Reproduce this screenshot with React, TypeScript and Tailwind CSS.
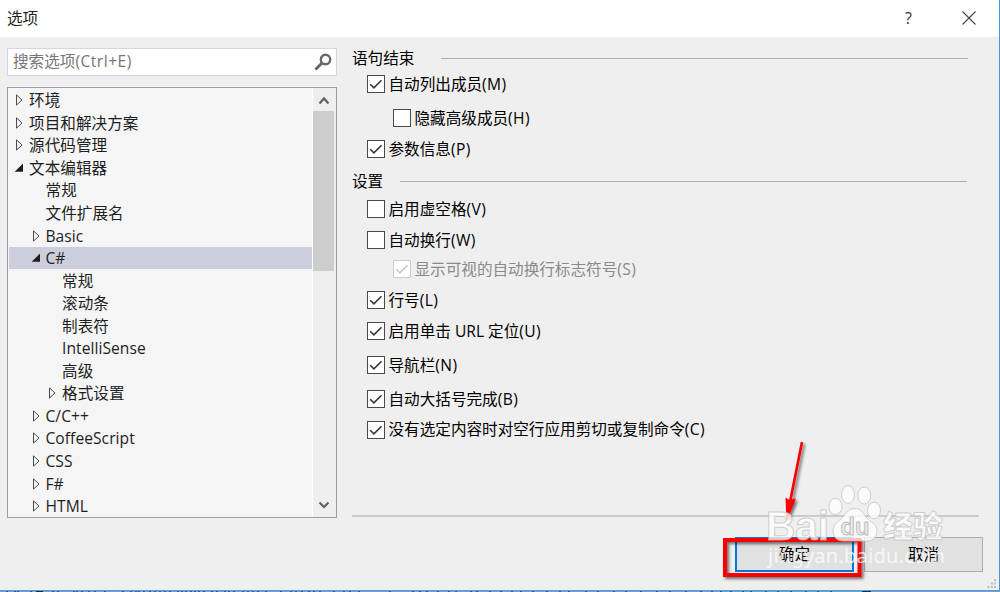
import clsx from 'clsx';

interface TreeNode {
  label: string;
  level: 0 | 1 | 2;
  state?: 'open' | 'closed';
  selected?: boolean;
}

interface Option {
  label: string;
  shortcut: string;
  gap: string;
  checked?: boolean;
  nested?: boolean;
  disabled?: boolean;
  raised?: boolean;
}

const tree: TreeNode[] = [
  { label: '环境', level: 0, state: 'closed' },
  { label: '项目和解决方案', level: 0, state: 'closed' },
  { label: '源代码管理', level: 0, state: 'closed' },
  { label: '文本编辑器', level: 0, state: 'open' },
  { label: '常规', level: 1 },
  { label: '文件扩展名', level: 1 },
  { label: 'Basic', level: 1, state: 'closed' },
  { label: 'C#', level: 1, state: 'open', selected: true },
  { label: '常规', level: 2 },
  { label: '滚动条', level: 2 },
  { label: '制表符', level: 2 },
  { label: 'IntelliSense', level: 2 },
  { label: '高级', level: 2 },
  { label: '格式设置', level: 2, state: 'closed' },
  { label: 'C/C++', level: 1, state: 'closed' },
  { label: 'CoffeeScript', level: 1, state: 'closed' },
  { label: 'CSS', level: 1, state: 'closed' },
  { label: 'F#', level: 1, state: 'closed' },
  { label: 'HTML', level: 1, state: 'closed' },
];

const statementOptions: Option[] = [
  { label: '自动列出成员', shortcut: '(M)', gap: 'mt-[6px]', checked: true },
  { label: '隐藏高级成员', shortcut: '(H)', gap: 'mt-4', nested: true },
  { label: '参数信息', shortcut: '(P)', gap: 'mt-[13px]', checked: true },
];

const settingOptions: Option[] = [
  { label: '启用虚空格', shortcut: '(V)', gap: 'mt-2' },
  { label: '自动换行', shortcut: '(W)', gap: 'mt-[13px]' },
  { label: '显示可视的自动换行标志符号', shortcut: '(S)', gap: 'mt-[11px]', checked: true, nested: true, disabled: true },
  { label: '行号', shortcut: '(L)', gap: 'mt-[13px]', checked: true },
  { label: '启用单击 URL 定位', shortcut: '(U)', gap: 'mt-[13px]', checked: true },
  { label: '导航栏', shortcut: '(N)', gap: 'mt-4', checked: true },
  { label: '自动大括号完成', shortcut: '(B)', gap: 'mt-4', checked: true },
  { label: '没有选定内容时对空行应用剪切或复制命令', shortcut: '(C)', gap: 'mt-[13px]', checked: true, raised: true },
];

const indent = { 0: 'pl-[5px]', 1: 'pl-[21.5px]', 2: 'pl-[38px]' };

function Arrow({ state }: { state?: 'open' | 'closed' }) {
  return (
    <svg className="mr-[3px] h-3 w-[12px] shrink-0" viewBox="0 0 12 12" fill="none">
      {state === 'closed' && <path d="M2.5 0.9v10.2L8 6z" stroke="#4a4a4a" />}
      {state === 'open' && <path d="M9 1.5v8.300H0.700z" fill="#1e1e1e" />}
    </svg>
  );
}

function CheckRow({ option }: { option: Option }) {
  return (
    <label className={clsx('flex h-[18px] items-center', option.gap, option.nested ? 'pl-[40.5px]' : 'pl-[14.5px]')}>
      <span
        className={clsx(
          'flex size-[18px] shrink-0 items-center justify-center border bg-white',
          option.disabled ? 'border-[#cccccc] text-[#c4c4c4]' : 'border-[#4a4a4a] text-[#333333]',
        )}
      >
        {option.checked && (
          <svg className="size-4" viewBox="0 0 16 16" fill="none" stroke="currentColor" strokeWidth="1.5">
            <path d="M2.2 8.2l3.7 3.7 7.6-7.7" />
          </svg>
        )}
      </span>
      <span
        className={clsx(
          'ml-1 leading-[18px] whitespace-nowrap',
          option.disabled && 'text-[#8a8a8a]',
          option.raised && '-mt-[3px]',
        )}
      >
        {option.label}
        <span className="tracking-[0.4px]">{option.shortcut}</span>
      </span>
    </label>
  );
}

function Annotation() {
  return (
    <svg className="pointer-events-none absolute top-[430px] left-[700px] h-[162px] w-[300px]" viewBox="700 430 300 162">
      <defs>
        <filter id="shadow" x="-30%" y="-30%" width="160%" height="160%">
          <feDropShadow dx="2" dy="2" stdDeviation="1.5" floodColor="#000" floodOpacity="0.55" />
        </filter>
      </defs>
      <g filter="url(#shadow)">
        <rect x="725" y="540" width="134.5" height="35" fill="none" stroke="#fb0000" strokeWidth="4" />
        <path d="M802 442L790 502" stroke="#fb0000" strokeWidth="2.6" />
        <path d="M785.500 497.500l4 2.500 6.500-1.500-9.500 23z" fill="#fb0000" />
      </g>
    </svg>
  );
}

function Watermark() {
  return (
    <svg
      className="pointer-events-none absolute top-[475px] left-[755px] h-[105px] w-[205px]"
      viewBox="755 475 205 105"
      fill="#ffffff"
      fillOpacity="0.76"
      stroke="#bdbdbd"
      strokeOpacity="0.7"
      strokeLinejoin="round"
    >
      <g className="font-['Liberation_Sans'] font-bold tracking-normal">
        <text x="766" y="540" fontSize="40" textLength="63" lengthAdjust="spacingAndGlyphs">Bai</text>
        <ellipse cx="835.5" cy="506.5" rx="6.500" ry="8.3" />
        <ellipse cx="848" cy="494.500" rx="6.500" ry="8.8" />
        <ellipse cx="864.3" cy="495.5" rx="6.500" ry="8.5" />
        <ellipse cx="874" cy="510.5" rx="6.500" ry="8.3" />
        <path d="M855 508.5c-6 0-8.500 4-12 8.500-4 4.500-10 7-10 14 0 6 4 10 10 10h24c6 0 10-4 10-10 0-7-7-9-11-14-3-4-5-8.500-11-8.500z" />
        <text x="840.500" y="534.500" fontSize="24" fill="#e2e2e2" stroke="#a8a8a8" textLength="29" lengthAdjust="spacingAndGlyphs">du</text>
      </g>
      <text x="883" y="537" className="font-['Noto_Sans_CJK_SC'] font-black tracking-normal" fontSize="30" textLength="60">经验</text>
      <text x="768" y="563" className="font-['Noto_Sans'] tracking-normal" fontSize="20" stroke="none" textLength="177">jingyan.baidu.com</text>
    </svg>
  );
}

// Slice of the editor window that shows under the dialog's bottom edge
const behind = [6, 14, 17, 30, 37, 40, 52, 57, 73, 76, 81, 88, 94, 104, 122, 130, 135, 138, 143, 149, 154, 159, 164, 169, 177, 181, 185, 190, 194, 198, 203, 211, 216, 224, 228, 233, 242, 247, 252, 257, 265, 280, 290, 295, 301, 308, 313, 319, 333, 343, 349, 358, 389, 412, 419, 426, 437, 448, 455, 470, 476, 489, 500, 511, 520, 532, 546, 559, 568, 585, 597, 613, 625, 640, 656, 669, 685, 700, 711, 720, 730, 742, 750, 765, 777, 790, 805, 817, 830, 865];

export default function App() {
  return (
    <div className="relative flex h-[592px] w-[1000px] flex-col overflow-hidden bg-[#efefef] font-['Open_Sans','Noto_Sans_CJK_SC',sans-serif] text-[15.6px] text-[#1e1e1e]">
      <header className="flex h-[37px] shrink-0 items-center border-r border-[#4a96d2] bg-white pr-[23px] pl-[7px]">
        <h1 className="flex-1 leading-none">选项</h1>
        <button className="mr-[50px] mb-[2px] text-base leading-none text-[#333]">?</button>
        <svg className="mb-px size-[14px]" viewBox="0 0 14 14" stroke="#444" strokeWidth="1.1">
          <path d="M0.5 0.500l13 13M13.500 0.500l-13 13" />
        </svg>
      </header>

      <div className="flex flex-1 border-r border-[#4a96d2]">
        <aside className="ml-[7px] w-[330px] shrink-0 pt-[11px]">
          <div className="flex h-7 items-center border border-[#d5d5e6] bg-white pr-[4px] pl-[5px]">
            <span className="flex-1 leading-none text-[#767676]">
              搜索选项<span className="tracking-[0.5px]">(Ctrl+E)</span>
            </span>
            <svg className="size-[18px]" viewBox="0 0 18 18" fill="none" stroke="#686868">
              <circle cx="11.500" cy="6.500" r="4.700" strokeWidth="2.400" />
              <path d="M8 10L1.500 16.500" strokeWidth="3" />
            </svg>
          </div>

          <div className="mt-[11px] flex h-[431px] border border-[#9b9ea8] bg-[#f5f5f5]">
            <ul className="flex-1 pt-[1px] pl-[1px] tracking-[0.05px]">
              {tree.map((node, i) => (
                <li
                  key={i}
                  className={clsx(
                    'flex h-[22.55px] items-center leading-[22px]',
                    indent[node.level],
                    node.selected && 'bg-[#cccedb]',
                  )}
                >
                  <Arrow state={node.state} />
                  <span className="whitespace-nowrap">{node.label}</span>
                </li>
              ))}
            </ul>
            <div className="flex w-[24px] flex-col items-center border-l border-white bg-[#efefef] pr-[2px]">
              <svg className="h-[23px] w-3 shrink-0" viewBox="0 0 12 23" fill="none" stroke="#606060" strokeWidth="2.200">
                <path d="M1.500 15.500L6 10.500l4.500 5" />
              </svg>
              <div className="h-[160px] w-full bg-[#cdcdcd]" />
              <svg className="mt-auto h-[23px] w-3 shrink-0" viewBox="0 0 12 23" fill="none" stroke="#606060" strokeWidth="2.200">
                <path d="M1.500 8.500L6 13l4.500-4.500" />
              </svg>
            </div>
          </div>
        </aside>

        <main className="ml-[15px] w-[631px] shrink-0 pt-[12px] text-black">
          <div className="flex h-5 items-center pr-[15px]">
            <h2 className="w-[89px] leading-none">语句结束</h2>
            <hr className="-mt-[2px] flex-1 border-[#b0b0b0]" />
          </div>
          {statementOptions.map((o) => (
            <CheckRow key={o.label} option={o} />
          ))}

          <div className="mt-[14px] flex h-5 items-center pr-[16px]">
            <h2 className="w-[48px] leading-none">设置</h2>
            <hr className="-mt-[2px] flex-1 border-[#b0b0b0]" />
          </div>
          {settingOptions.map((o) => (
            <CheckRow key={o.label} option={o} />
          ))}

          <hr className="mt-[76px] mr-[4px] border-t-2 border-[#cbcbcb]" />
          <div className="mt-5 flex justify-end gap-[10px]">
            <button className="h-[35px] w-[119px] border-2 border-[#0078d7] bg-[#e1e1e1] pt-px leading-none">确定</button>
            <button className="h-[35px] w-[119px] border border-[#adadad] bg-[#e1e1e1] pt-px leading-none">取消</button>
          </div>
        </main>
      </div>

      <svg className="absolute right-[3px] bottom-[3px] size-[10px]" viewBox="0 0 10 10" fill="#bcbcbc">
        <path d="M7 0h2v2h-2zM4 3.500h2v2h-2zM7 3.500h2v2h-2zM0.500 7h2v2h-2zM4 7h2v2h-2zM7 7h2v2h-2z" />
      </svg>
      <svg className="h-[2px] w-full shrink-0" viewBox="0 0 1000 2">
        <rect width="1000" height="1" fill="#4f9fe0" />
        <rect y="1" width="1000" height="1" fill="#76a0bd" />
        {behind.map((x) => (
          <rect key={x} x={x} y="1" width="2" height="1" fill="#355f80" />
        ))}
        <rect x="36" y="1" width="7" height="1" fill="#182e40" />
        <rect x="862" y="1" width="9" height="1" fill="#182e40" />
      </svg>

      <Annotation />
      <Watermark />
    </div>
  );
}
